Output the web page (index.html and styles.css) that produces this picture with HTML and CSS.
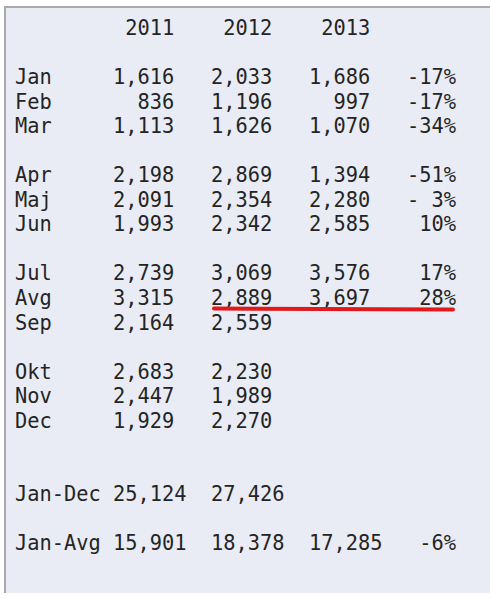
FILE: index.html
```
<!DOCTYPE html>
<html>
<head>
<meta charset="utf-8">
<link rel="stylesheet" href="styles.css">
</head>
<body>
<div class="panel">
<pre class="table">         2011    2012    2013

Jan     1,616   2,033   1,686   -17%
Feb       836   1,196     997   -17%
Mar     1,113   1,626   1,070   -34%

Apr     2,198   2,869   1,394   -51%
Maj     2,091   2,354   2,280   - 3%
Jun     1,993   2,342   2,585    10%

Jul     2,739   3,069   3,576    17%
Avg     3,315   2,889   3,697    28%
Sep     2,164   2,559

Okt     2,683   2,230
Nov     2,447   1,989
Dec     1,929   2,270


Jan-Dec 25,124  27,426

Jan-Avg 15,901  18,378  17,285   -6%</pre>
<div class="mark"></div>
</div>
</body>
</html>
```
FILE: styles.css
```
html, body {
  margin: 0;
  padding: 0;
  background: #ffffff;
}
body {
  width: 490px;
  height: 599px;
  overflow: hidden;
}
.panel {
  position: relative;
  margin: 6px 0 0 4px;
  height: 577px;
  border-top: 2px solid #a9a9a9;
  border-left: 2px solid #a9a9a9;
  background: #e9ecf4;
  padding: 8px 0 0 9px;
  box-sizing: content-box;
}
.table {
  margin: 0;
  font-family: "DejaVu Sans Mono", monospace;
  font-size: 20.35px;
  line-height: 24.55px;
  color: #242424;
}
.mark {
  position: absolute;
  left: 206px;
  top: 298.5px;
  width: 243px;
  height: 3.5px;
  border-radius: 2px;
  background: #e0191c;
  transform: rotate(0.2deg);
}
```
